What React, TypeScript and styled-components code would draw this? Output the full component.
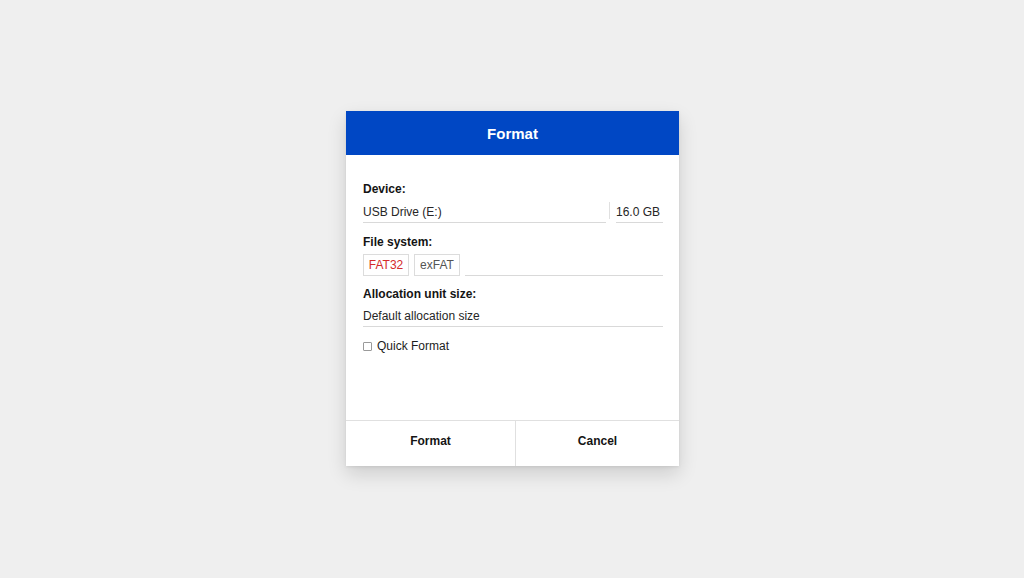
import styled, { createGlobalStyle } from "styled-components";

const GlobalStyle = createGlobalStyle`
  html, body {
    margin: 0;
    padding: 0;
    background: #efefef;
  }
  * {
    box-sizing: border-box;
  }
`;

function App() {
  return (
    <Page>
      <GlobalStyle />
      <Dialog>
        <Header>Format</Header>
        <Body>
          <Label>Device:</Label>
          <DeviceRow>
            <Field grow>USB Drive (E:)</Field>
            <Separator />
            <Field>16.0 GB</Field>
          </DeviceRow>

          <Label spaced>File system:</Label>
          <ChipRow>
            <Chip selected>FAT32</Chip>
            <Chip>exFAT</Chip>
            <Filler />
          </ChipRow>

          <Label spaced small>Allocation unit size:</Label>
          <Field>Default allocation size</Field>

          <CheckRow>
            <Box />
            <span>Quick Format</span>
          </CheckRow>
        </Body>
        <Footer>
          <FooterButton>Format</FooterButton>
          <FooterButton>Cancel</FooterButton>
        </Footer>
      </Dialog>
    </Page>
  );
}

export default App;

const Page = styled.div`
  width: 100vw;
  height: 100vh;
  display: flex;
  align-items: center;
  justify-content: center;
  font-family: "Liberation Sans", Arial, sans-serif;
`;

const Dialog = styled.div`
  width: 333px;
  height: 355px;
  margin-left: 1px;
  margin-top: -1px;
  background: #ffffff;
  display: flex;
  flex-direction: column;
  box-shadow: 0 8px 18px rgba(0, 0, 0, 0.14), 0 1px 3px rgba(0, 0, 0, 0.08);
`;

const Header = styled.div`
  height: 44px;
  flex-shrink: 0;
  background: #0047c4;
  color: #ffffff;
  font-size: 15px;
  font-weight: 700;
  display: flex;
  align-items: center;
  justify-content: center;
`;

const Body = styled.div`
  flex: 1;
  display: flex;
  flex-direction: column;
  padding: 27px 16px 0 17px;
`;

const Label = styled.div<{ spaced?: boolean; small?: boolean }>`
  font-size: 12px;
  line-height: 15px;
  font-weight: 700;
  color: #141414;
  margin-top: ${(p) => (p.spaced ? (p.small ? "11px" : "12px") : "0")};
  margin-bottom: ${(p) => (p.small ? "3px" : "4px")};
`;

const DeviceRow = styled.div`
  display: flex;
  align-items: stretch;
`;

const Field = styled.div<{ grow?: boolean }>`
  flex: ${(p) => (p.grow ? "1" : "none")};
  height: 22px;
  display: flex;
  align-items: center;
  font-size: 12px;
  color: #262626;
  border-bottom: 1px solid #d9d9d9;
  padding-right: 3px;
`;

const Separator = styled.div`
  width: 1px;
  margin: 1px 6px 4px 3px;
  background: #e0e0e0;
`;

const ChipRow = styled.div`
  display: flex;
  align-items: stretch;
  gap: 5px;
  height: 22px;
`;

const Chip = styled.div<{ selected?: boolean }>`
  display: flex;
  align-items: center;
  justify-content: center;
  width: 46px;
  border: 1px solid #dcdcdc;
  font-size: 12px;
  color: ${(p) => (p.selected ? "#d52b2b" : "#555555")};
`;

const Filler = styled.div`
  flex: 1;
  border-bottom: 1px solid #d9d9d9;
`;

const CheckRow = styled.div`
  display: flex;
  align-items: center;
  gap: 5px;
  margin-top: 12px;
  font-size: 12px;
  color: #1c1c1c;
`;

const Box = styled.span`
  width: 9px;
  height: 9px;
  border: 1px solid #9a9a9a;
  border-radius: 1px;
  background: #fff;
`;

const Footer = styled.div`
  height: 46px;
  flex-shrink: 0;
  display: grid;
  grid-template-columns: 169px 1fr;
  border-top: 1px solid #e0e0e0;
`;

const FooterButton = styled.div`
  display: flex;
  align-items: center;
  justify-content: center;
  padding-bottom: 6px;
  font-size: 12px;
  font-weight: 700;
  color: #151515;
  & + & {
    border-left: 1px solid #e0e0e0;
  }
`;
